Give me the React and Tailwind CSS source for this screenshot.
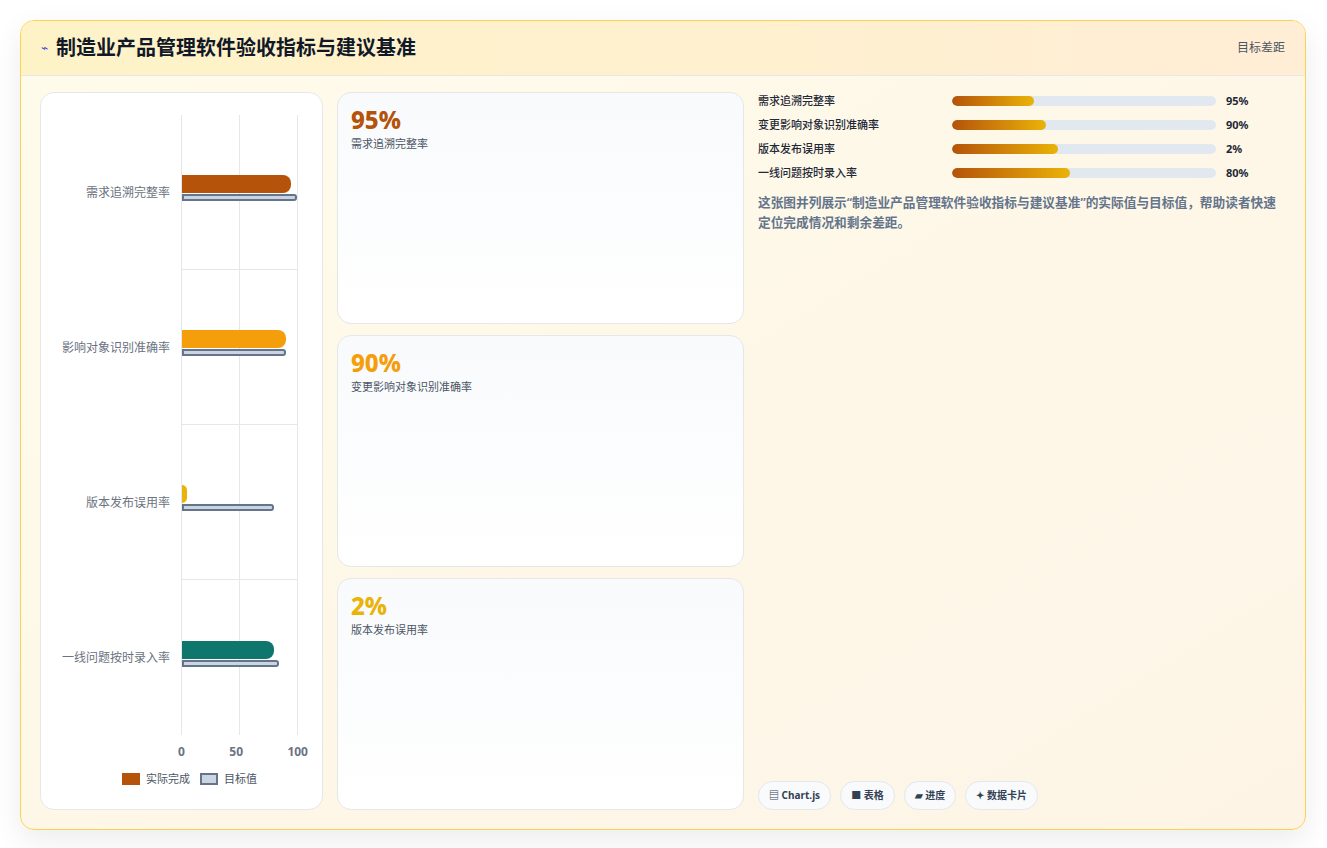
const F = { fontFamily: '"Noto Sans","Noto Sans CJK SC",sans-serif' };
const rows = [
  { l: '需求追溯完整率', a: 95, t: 100, c: '#b45309' },
  { l: '影响对象识别准确率', a: 90, t: 90, c: '#f59e0b' },
  { l: '版本发布误用率', a: 4, t: 80, c: '#eab308' },
  { l: '一线问题按时录入率', a: 80, t: 84, c: '#0f766e' },
];
const cards = [
  { v: '95%', l: '需求追溯完整率', c: 'text-[#b45309]' },
  { v: '90%', l: '变更影响对象识别准确率', c: 'text-[#f59e0b]' },
  { v: '2%', l: '版本发布误用率', c: 'text-[#eab308]' },
];
const prog = [
  { l: '需求追溯完整率', v: '95%', w: 82 },
  { l: '变更影响对象识别准确率', v: '90%', w: 94 },
  { l: '版本发布误用率', v: '2%', w: 106 },
  { l: '一线问题按时录入率', v: '80%', w: 118 },
];
export default function App() {
  return (
    <div style={F} className="w-[1327px] h-[848px] bg-white p-[20px] pr-[21px]">
      <div className="h-[810px] rounded-[14px] border border-[#fcd34d] bg-gradient-to-br from-[#fffbeb] to-[#fdf4e6] shadow-[0_10px_30px_rgba(0,0,0,0.08)] flex flex-col overflow-hidden">
        <div className="h-[55px] flex items-center justify-between px-[20px] bg-gradient-to-r from-[#fef3c7] to-[#ffedd5] border-b border-[#e5e7eb]">
          <div className="flex items-center gap-[8px]">
            <span className="text-[#4f46e5] text-[12px]">⌁</span>
            <span className="text-[20px] font-bold text-[#111827]">制造业产品管理软件验收指标与建议基准</span>
          </div>
          <span className="text-[12px] text-[#4b5563]">目标差距</span>
        </div>
        <div className="flex-1 flex gap-[14px] p-[19px] pt-[16px]">
          <div className="w-[283px] rounded-[14px] bg-white border border-[#e5e7eb] flex flex-col px-[12px] pt-[22px] pb-[20px]">
            <div className="flex">
              <div className="w-[128px] flex flex-col">
                {rows.map(r => (
                  <div key={r.l} className="h-[155px] flex items-center justify-end pr-[11px] text-[12px] text-[#6b7280] whitespace-nowrap">{r.l}</div>
                ))}
              </div>
              <div className="w-[116px] border-l border-[#e5e7eb] relative">
                <div className="absolute top-0 bottom-0 left-[57px] border-l border-[#e5e7eb]" />
                <div className="absolute top-0 bottom-0 left-[115px] border-l border-[#e5e7eb]" />
                {rows.map((r, i) => (
                  <div key={r.l} className={`h-[155px] flex flex-col justify-center pb-[8px] relative ${i < 3 ? 'border-b border-[#e5e7eb]' : ''}`}>
                    <div className="h-[18px] rounded-r-[8px]" style={{ width: r.a * 1.15, background: r.c }} />
                    <div className="h-[7px] mt-[1px] rounded-r-[3px] bg-[#cbd5e1] border-2 border-[#64748b]" style={{ width: r.t * 1.15 }} />
                  </div>
                ))}
              </div>
            </div>
            <div className="flex ml-[125px] w-[130px] justify-between text-[12px] font-bold text-[#6b7280] mt-[8px]">
              <span>0</span><span>50</span><span>100</span>
            </div>
            <div className="flex justify-center items-center gap-[6px] mt-[10px] text-[11px] text-[#4b5563] ml-[16px]">
              <span className="w-[18px] h-[12px] bg-[#b45309]" />实际完成
              <span className="w-[18px] h-[12px] bg-[#cbd5e1] border-2 border-[#64748b] ml-[4px]" />目标值
            </div>
          </div>
          <div className="w-[407px] flex flex-col gap-[11px]">
            {cards.map(c => (
              <div key={c.l} className="flex-1 rounded-[14px] border border-[#e5e7eb] bg-gradient-to-b from-[#f8fafc] to-white px-[13px] py-[12px]">
                <div className={`text-[24px] font-extrabold leading-[30px] ${c.c}`}>{c.v}</div>
                <div className="text-[11px] text-[#4b5563] mt-[1px]">{c.l}</div>
              </div>
            ))}
          </div>
          <div className="flex-1 flex flex-col">
            <div className="flex flex-col gap-[6px] pt-[0px]">
              {prog.map(p => (
                <div key={p.l} className="flex items-center h-[18px] text-[11px] text-[#1f2937]">
                  <span className="w-[194px] font-medium">{p.l}</span>
                  <div className="w-[264px] h-[10px] rounded-full bg-[#e2e8f0] overflow-hidden">
                    <div className="h-full rounded-full bg-gradient-to-r from-[#b45309] to-[#eab308]" style={{ width: p.w }} />
                  </div>
                  <span className="ml-[10px] font-bold">{p.v}</span>
                </div>
              ))}
            </div>
            <p className="mt-[10px] text-[12.7px] font-semibold leading-[20px] text-[#64748b] pr-[6px]">这张图并列展示“制造业产品管理软件验收指标与建议基准”的实际值与目标值，帮助读者快速定位完成情况和剩余差距。</p>
            <div className="mt-auto flex gap-[9px] text-[10px] font-bold text-[#334155]">
              {['▤ Chart.js', '■ 表格', '▰ 进度', '✦ 数据卡片'].map(t => (
                <span key={t} className="px-[10px] h-[29px] flex items-center rounded-full bg-[#f8fafc] border border-[#e5e7eb]">{t}</span>
              ))}
            </div>
          </div>
        </div>
      </div>
    </div>
  );
}
